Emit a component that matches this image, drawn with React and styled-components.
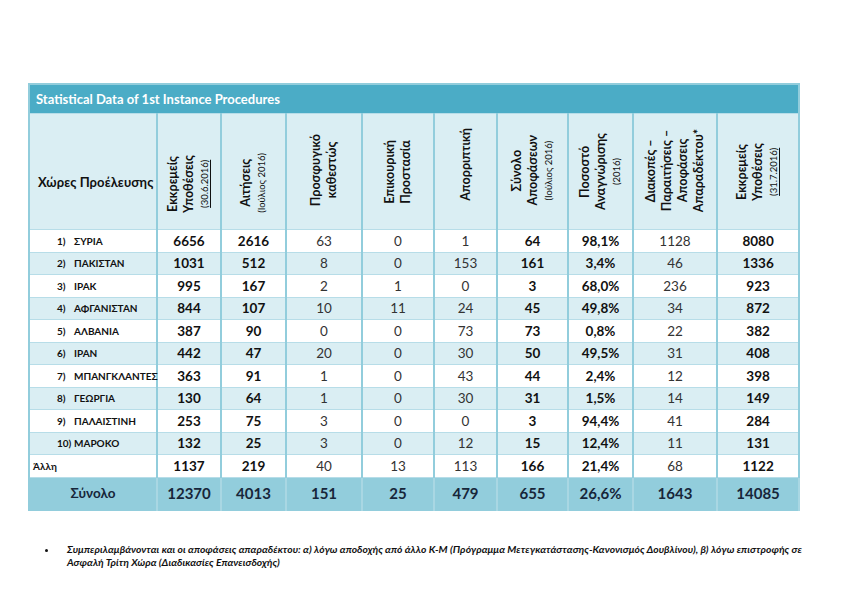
import React from "react";
import styled, { createGlobalStyle } from "styled-components";

const Global = createGlobalStyle`
  html, body { margin: 0; padding: 0; background: #ffffff; }
  body { font-family: Lato, "Open Sans", sans-serif; color: #111; }
`;

const Page = styled.div`
  width: 842px;
  height: 596px;
  padding: 83px 0 0 28px;
  box-sizing: border-box;
  overflow: hidden;
`;

const Table = styled.table`
  border-collapse: collapse;
  table-layout: fixed;
  width: 770px;
  border: 2px solid #92cddc;
  font-family: Lato, "Open Sans", sans-serif;
`;

const TitleCell = styled.th`
  background: #4bacc6;
  color: #ffffff;
  height: 28px;
  padding: 0 0 0 6px;
  text-align: left;
  font-size: 13px;
  font-weight: 700;
  border-bottom: 1px solid #b7dde8;
`;

const HeadRow = styled.tr`
  height: 116px;
  background: #daeef3;
`;

const CornerTh = styled.th`
  text-align: left;
  padding: 20px 0 0 8px;
  font-size: 13px;
  font-weight: 700;
  white-space: nowrap;
  letter-spacing: 0.1px;
  border-right: 2px solid #92cddc;
  border-bottom: 1px solid #b7dde8;
`;

const VTh = styled.th`
  text-align: center;
  vertical-align: middle;
  padding: ${p => (p.$shift > 0 ? p.$shift * 2 : 0)}px 0 ${p => (p.$shift < 0 ? -p.$shift * 2 : 0)}px 0;
  border-right: 2px solid #92cddc;
  border-bottom: 1px solid #b7dde8;
`;

const VText = styled.div`
  display: inline-block;
  writing-mode: vertical-rl;
  transform: rotate(180deg);
  text-align: center;
  font-size: 12.5px;
  font-weight: 700;
  line-height: 16px;
  color: #111;
`;

const Small = styled.span`
  font-size: 9.5px;
  font-weight: 400;
  text-decoration: ${p => (p.$u ? "underline" : "none")};
`;

const Row = styled.tr`
  height: 22.5px;
  background: ${p => (p.$stripe ? "#daeef3" : "#ffffff")};
`;

const TotalRow = styled.tr`
  height: 33px;
  background: #92cddc;
`;

const NameTd = styled.td`
  padding: 0 0 0 ${p => (p.$plain ? 3 : 27)}px;
  font-size: 10px;
  font-weight: 700;
  border-right: 2px solid #92cddc;
  border-bottom: 1px solid #b7dde8;
  white-space: nowrap;
`;

const NameInner = styled.div`
  display: flex;
  align-items: center;
`;

const Num = styled.span`
  width: 17px;
  flex: none;
`;

const Td = styled.td`
  text-align: center;
  font-size: 13.5px;
  font-weight: ${p => (p.$bold ? 700 : 400)};
  color: ${p => (p.$bold ? "#111" : "#333")};
  border-right: 2px solid #92cddc;
  border-bottom: 1px solid #b7dde8;
  padding: 0;
`;

const TotalLabel = styled.td`
  text-align: center;
  font-size: 13.5px;
  font-weight: 700;
  color: #17263a;
  border-right: 2px solid #a9d7e3;
`;

const TotalTd = styled.td`
  text-align: center;
  font-size: 15px;
  font-weight: 700;
  color: #17263a;
  border-right: 2px solid #a9d7e3;
  padding: 0;
`;

const Notes = styled.ul`
  margin: 32px 0 0 0;
  padding: 0 0 0 30px;
  list-style: disc;
  font-family: Lato, "Open Sans", sans-serif;
  font-size: 10.3px;
  letter-spacing: 0.05px;
  font-style: italic;
  font-weight: 700;
  line-height: 13px;
  color: #111;
  width: 790px;
  white-space: nowrap;
`;

const Note = styled.li`
  padding-left: 9px;
`;

const rows = [
  ["1)", "ΣΥΡΙΑ", 6656, 2616, 63, 0, 1, 64, "98,1%", 1128, 8080],
  ["2)", "ΠΑΚΙΣΤΑΝ", 1031, 512, 8, 0, 153, 161, "3,4%", 46, 1336],
  ["3)", "ΙΡΑΚ", 995, 167, 2, 1, 0, 3, "68,0%", 236, 923],
  ["4)", "ΑΦΓΑΝΙΣΤΑΝ", 844, 107, 10, 11, 24, 45, "49,8%", 34, 872],
  ["5)", "ΑΛΒΑΝΙΑ", 387, 90, 0, 0, 73, 73, "0,8%", 22, 382],
  ["6)", "ΙΡΑΝ", 442, 47, 20, 0, 30, 50, "49,5%", 31, 408],
  ["7)", "ΜΠΑΝΓΚΛΑΝΤΕΣ", 363, 91, 1, 0, 43, 44, "2,4%", 12, 398],
  ["8)", "ΓΕΩΡΓΙΑ", 130, 64, 1, 0, 30, 31, "1,5%", 14, 149],
  ["9)", "ΠΑΛΑΙΣΤΙΝΗ", 253, 75, 3, 0, 0, 3, "94,4%", 41, 284],
  ["10)", "ΜΑΡΟΚΟ", 132, 25, 3, 0, 12, 15, "12,4%", 11, 131],
];

const other = [1137, 219, 40, 13, 113, 166, "21,4%", 68, 1122];
const totals = [12370, 4013, 151, 25, 479, 655, "26,6%", 1643, 14085];
const boldCols = [true, true, false, false, false, true, true, false, true];
const widths = [128, 64, 65, 76, 72, 63, 71, 65, 84, 82];

export default function App() {
  return (
    <>
      <Global />
      <Page>
        <Table>
          <colgroup>
            {widths.map((w, i) => (
              <col key={i} style={{ width: w }} />
            ))}
          </colgroup>
          <thead>
            <tr>
              <TitleCell colSpan={10}>Statistical Data of 1st Instance Procedures</TitleCell>
            </tr>
            <HeadRow>
              <CornerTh>Χώρες Προέλευσης</CornerTh>
              <VTh $shift={14}>
                <VText>
                  Εκκρεμείς<br />Υποθέσεις<br /><Small $u>(30.6.2016)</Small>
                </VText>
              </VTh>
              <VTh $shift={13}>
                <VText>
                  Αιτήσεις<br /><Small>(Ιούλιος 2016)</Small>
                </VText>
              </VTh>
              <VTh $shift={0}>
                <VText>
                  Προσφυγικό<br />καθεστώς
                </VText>
              </VTh>
              <VTh $shift={2}>
                <VText>
                  Επικουρική<br />Προστασία
                </VText>
              </VTh>
              <VTh $shift={-6}>
                <VText>Απορριπτική</VText>
              </VTh>
              <VTh $shift={0}>
                <VText>
                  Σύνολο<br />Αποφάσεων<br /><Small>(Ιούλιος 2016)</Small>
                </VText>
              </VTh>
              <VTh $shift={1}>
                <VText>
                  Ποσοστό<br />Αναγνώρισης<br /><Small>(2016)</Small>
                </VText>
              </VTh>
              <VTh $shift={1}>
                <VText>
                  Διακοπές –<br />Παραιτήσεις –<br />Αποφάσεις<br />Απαραδέκτου*
                </VText>
              </VTh>
              <VTh $shift={2}>
                <VText>
                  Εκκρεμείς<br />Υποθέσεις<br /><Small $u>(31.7.2016)</Small>
                </VText>
              </VTh>
            </HeadRow>
          </thead>
          <tbody>
            {rows.map((r, i) => (
              <Row key={r[1]} $stripe={i % 2 === 1}>
                <NameTd>
                  <NameInner>
                    <Num>{r[0]}</Num>
                    <span>{r[1]}</span>
                  </NameInner>
                </NameTd>
                {r.slice(2).map((v, j) => (
                  <Td key={j} $bold={boldCols[j]}>{v}</Td>
                ))}
              </Row>
            ))}
            <Row $stripe={false}>
              <NameTd $plain>Άλλη</NameTd>
              {other.map((v, j) => (
                <Td key={j} $bold={boldCols[j]}>{v}</Td>
              ))}
            </Row>
            <TotalRow>
              <TotalLabel>Σύνολο</TotalLabel>
              {totals.map((v, j) => (
                <TotalTd key={j}>{v}</TotalTd>
              ))}
            </TotalRow>
          </tbody>
        </Table>
        <Notes>
          <Note>
            Συμπεριλαμβάνονται και οι αποφάσεις απαραδέκτου: α) λόγω αποδοχής από άλλο Κ-Μ (Πρόγραμμα Μετεγκατάστασης-Κανονισμός Δουβλίνου), β) λόγω επιστροφής σε
            <br />
            Ασφαλή Τρίτη Χώρα (Διαδικασίες Επανεισδοχής)
          </Note>
        </Notes>
      </Page>
    </>
  );
}
